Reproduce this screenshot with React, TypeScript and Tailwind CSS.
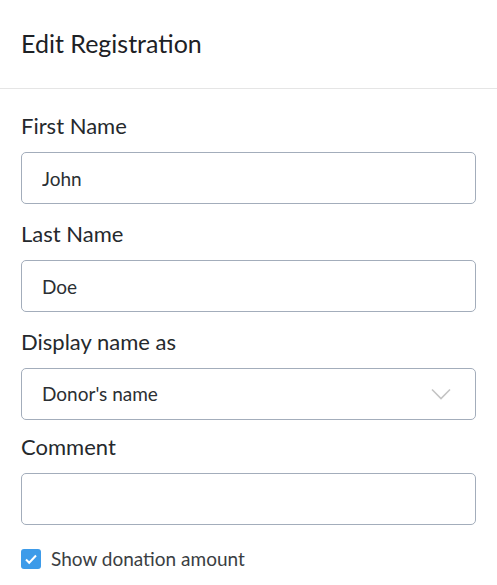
import { useState } from "react";

const inputCls =
  "w-full h-[52px] rounded-[5px] border border-[#a3adbb] bg-white px-5 text-[19px] text-[#2b2f33] outline-none";

function Field({ label, className, children }: { label: string; className?: string; children: React.ReactNode }) {
  return (
    <div className={"flex flex-col " + (className ?? "")}>
      <label className="text-[22px] leading-[26px] text-[#25292d] mb-[13px]">{label}</label>
      {children}
    </div>
  );
}

export default function App() {
  const [first, setFirst] = useState("John");
  const [last, setLast] = useState("Doe");
  const [display, setDisplay] = useState("Donor's name");
  const [comment, setComment] = useState("");
  const [showAmount, setShowAmount] = useState(true);

  return (
    <div className="w-[497px] h-[585px] overflow-hidden bg-white font-['Lato',sans-serif]">
      <div className="h-[89px] flex items-center px-[21px] border-b border-[#e5e5e5]">
        <h2 className="text-[25px] text-[#1d2125]">Edit Registration</h2>
      </div>

      <div className="px-[21px] pt-[24px] flex flex-col">
        <Field label="First Name">
          <input className={inputCls} value={first} onChange={(e) => setFirst(e.target.value)} />
        </Field>
        <Field label="Last Name" className="mt-[17px]">
          <input className={inputCls} value={last} onChange={(e) => setLast(e.target.value)} />
        </Field>
        <Field label="Display name as" className="mt-[17px]">
          <div className="relative">
            <select
              className={inputCls + " appearance-none cursor-pointer"}
              value={display}
              onChange={(e) => setDisplay(e.target.value)}
            >
              <option>Donor's name</option>
              <option>Anonymous</option>
            </select>
            <svg
              className="pointer-events-none absolute right-[25px] top-1/2 -translate-y-1/2"
              width="20"
              height="12"
              viewBox="0 0 20 12"
              fill="none"
              stroke="#c4c4c4"
              strokeWidth="1.6"
            >
              <path d="M1 1.5l9 9 9-9" />
            </svg>
          </div>
        </Field>
        <Field label="Comment" className="mt-[14px]">
          <input className={inputCls} value={comment} onChange={(e) => setComment(e.target.value)} />
        </Field>

        <label className="flex items-center gap-[10px] cursor-pointer mt-[24px]">
          <input
            type="checkbox"
            className="sr-only"
            checked={showAmount}
            onChange={(e) => setShowAmount(e.target.checked)}
          />
          <span
            className={
              "w-[20px] h-[20px] rounded-[3px] flex items-center justify-center " +
              (showAmount ? "bg-[#3d9be9]" : "border border-[#a3adbb]")
            }
          >
            {showAmount && (
              <svg width="14" height="14" viewBox="0 0 14 14" fill="none" stroke="white" strokeWidth="2">
                <path d="M2 7.5l3.2 3.2L12 3.5" />
              </svg>
            )}
          </span>
          <span className="text-[19px] leading-[20px] text-[#3a3e42]">Show donation amount</span>
        </label>
      </div>
    </div>
  );
}
